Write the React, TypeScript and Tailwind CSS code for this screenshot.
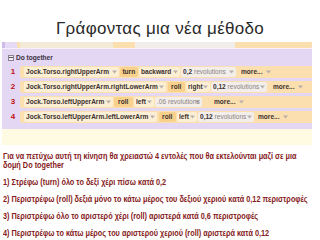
import type { ReactNode } from 'react';

const Arrow = () => (
  <svg width="5" height="4" viewBox="0 0 5 4" className="shrink-0 ml-[1px]">
    <path d="M0 0.5h5L2.5 3.5z" fill="#b8b0ac" />
  </svg>
);

// condensed look: the reference uses a narrow face, so squeeze the glyphs
const N = ({ children, className = '' }: { children: ReactNode; className?: string }) => (
  <span className={`inline-block whitespace-nowrap scale-x-[0.82] ${className}`}>{children}</span>
);

type Seg = { kind: 'obj' | 'verb' | 'opt' | 'amt' | 'more'; text: string; num?: string; cls: string };

const rows: Seg[][] = [
  [
    { kind: 'obj', text: 'Jock.Torso.rightUpperArm', cls: 'w-[95px] ml-[4px]' },
    { kind: 'verb', text: 'turn', cls: 'w-[18px] ml-[1px]' },
    { kind: 'opt', text: 'backward', cls: 'w-[41px] ml-[1px]' },
    { kind: 'amt', num: '0,2', text: 'revolutions', cls: 'w-[55px] ml-[1px]' },
    { kind: 'more', text: 'more...', cls: 'ml-[5px]' },
  ],
  [
    { kind: 'obj', text: 'Jock.Torso.rightUpperArm.rightLowerArm', cls: 'w-[142px] ml-[4px]' },
    { kind: 'verb', text: 'roll', cls: 'w-[17px] ml-[2px]' },
    { kind: 'opt', text: 'right', cls: 'w-[24px] ml-[1px]' },
    { kind: 'amt', num: '0,12', text: 'revolutions', cls: 'w-[56px] ml-[1px]' },
    { kind: 'more', text: 'more...', cls: 'ml-[6px]' },
  ],
  [
    { kind: 'obj', text: 'Jock.Torso.leftUpperArm', cls: 'w-[89px] ml-[4px]' },
    { kind: 'verb', text: 'roll', cls: 'w-[19px] ml-[1px]' },
    { kind: 'opt', text: 'left', cls: 'w-[20px] ml-[1px]' },
    { kind: 'amt', num: '', text: '.06 revolutions', cls: 'w-[47px] ml-[1px]' },
    { kind: 'more', text: 'more...', cls: 'ml-[12px]' },
  ],
  [
    { kind: 'obj', text: 'Jock.Torso.leftUpperArm.leftLowerArm', cls: 'w-[133px] ml-[4px]' },
    { kind: 'verb', text: 'roll', cls: 'w-[17px] ml-[2px]' },
    { kind: 'opt', text: 'left', cls: 'w-[20px] ml-[1px]' },
    { kind: 'amt', num: '0,12', text: 'revolutions', cls: 'w-[56px] ml-[1px]' },
    { kind: 'more', text: 'more...', cls: 'ml-[4px]' },
  ],
];

const Segment = ({ s }: { s: Seg }) => {
  if (s.kind === 'verb') {
    return (
      <div className={`${s.cls} h-[10px] bg-[#f8d28c] rounded-[2px] flex items-center justify-center shrink-0`}>
        <N className="font-bold text-[#3a3030]">{s.text}</N>
      </div>
    );
  }
  if (s.kind === 'more') {
    return (
      <div className={`${s.cls} flex items-center shrink-0`}>
        <span className="w-[24px] whitespace-nowrap">
          <N className="font-bold text-[#3a3030] origin-left">{s.text}</N>
        </span>
        <Arrow />
      </div>
    );
  }
  const bg = s.kind === 'amt' ? 'bg-[#f3eeea]' : 'bg-[#fcefd4]';
  return (
    <div className={`${s.cls} ${bg} h-[10px] rounded-[2px] flex items-center px-[2px] shrink-0 overflow-hidden`}>
      <span className="flex-1 min-w-0 whitespace-nowrap">
        {s.kind === 'amt' ? (
          <N className="origin-left scale-x-[0.78]">
            {s.num && <span className="font-bold text-[#3a3030]">{s.num} </span>}
            <span className="text-[#8a8484]">{s.text}</span>
          </N>
        ) : (
          <N className="font-bold text-[#3a3030] origin-left">{s.text}</N>
        )}
      </span>
      <Arrow />
    </div>
  );
};

const notes = [
  '1) Στρέφω (turn) όλο το δεξί χέρι πίσω κατά 0,2',
  '2) Περιστρέφω (roll) δεξιά μόνο το κάτω μέρος του δεξιού χεριού κατά 0,12 περιστροφές',
  '3) Περιστρέφω όλο το αριστερό χέρι (roll) αριστερά κατά 0,6 περιστροφές',
  '4) Περιστρέφω το κάτω μέρος του αριστερού χεριού (roll) αριστερά κατά 0,12',
];

const Note = ({ children, className = '' }: { children: ReactNode; className?: string }) => (
  <p className={`whitespace-nowrap ${className}`}>
    <span className="inline-block origin-left scale-x-[0.86]">{children}</span>
  </p>
);

export default function App() {
  return (
    <div className="w-[320px] h-[240px] bg-white overflow-hidden font-['Liberation_Sans',sans-serif]">
      <div className="h-[42px] pt-[19px] text-center">
        <div className="text-[17px] leading-[20px] text-[#2a2a2a] tracking-[0.3px]">Γράφοντας μια νέα μέθοδο</div>
      </div>

      <div className="ml-[2px] w-[310px] text-[8px] leading-[10px]">
        {/* cut-off statement above */}
        <div className="h-[6px] bg-[#e6dbf5] flex">
          <div className="w-[3px] bg-[#cdbde8]" />
          <div className="ml-[12px] flex-1 bg-[#fbdfae] rounded-b-[2px] flex">
            <div className="ml-[3px] w-[93px] bg-[#f4ead8]" />
            <div className="ml-[22px] w-[100px] bg-[#f1edea]" />
          </div>
        </div>
        <div className="h-[1px] bg-[#f5f0fb]" />

        {/* Do together block */}
        <div className="bg-[#e3d7f4] pb-[6px]">
          <div className="h-[17px] flex items-center pl-[6px] gap-[2px]">
            <div className="w-[6px] h-[6px] border border-[#8a8090] bg-[#f4f0fa] flex items-center justify-center">
              <div className="w-[4px] h-[1px] bg-[#555]" />
            </div>
            <N className="font-bold text-[#3a3040] origin-left">Do together</N>
          </div>
          <div className="flex flex-col gap-[3px]">
            {rows.map((r, i) => (
              <div key={i} className="flex items-center h-[12px]">
                <div className="w-[18px] pl-[4px] text-center font-bold text-[#c01010]">{i + 1}</div>
                <div className="flex-1 h-[12px] bg-[#fbdfae] rounded-l-[2px] flex items-center">
                  {r.map((s, j) => (
                    <Segment key={j} s={s} />
                  ))}
                </div>
              </div>
            ))}
          </div>
        </div>
        <div className="h-[16px] bg-[#fffbe2]" />
      </div>

      <div className="pl-[3px] pt-[7px] text-[8.5px] leading-[9px] font-bold text-[#861c1c]">
        <Note>Για να πετύχω αυτή τη κίνηση θα χρειαστώ 4 εντολές που θα εκτελούνται μαζί σε μια</Note>
        <Note>δομή Do together</Note>
        {notes.map((n) => (
          <Note key={n} className="mt-[8px]">
            {n}
          </Note>
        ))}
      </div>
    </div>
  );
}
